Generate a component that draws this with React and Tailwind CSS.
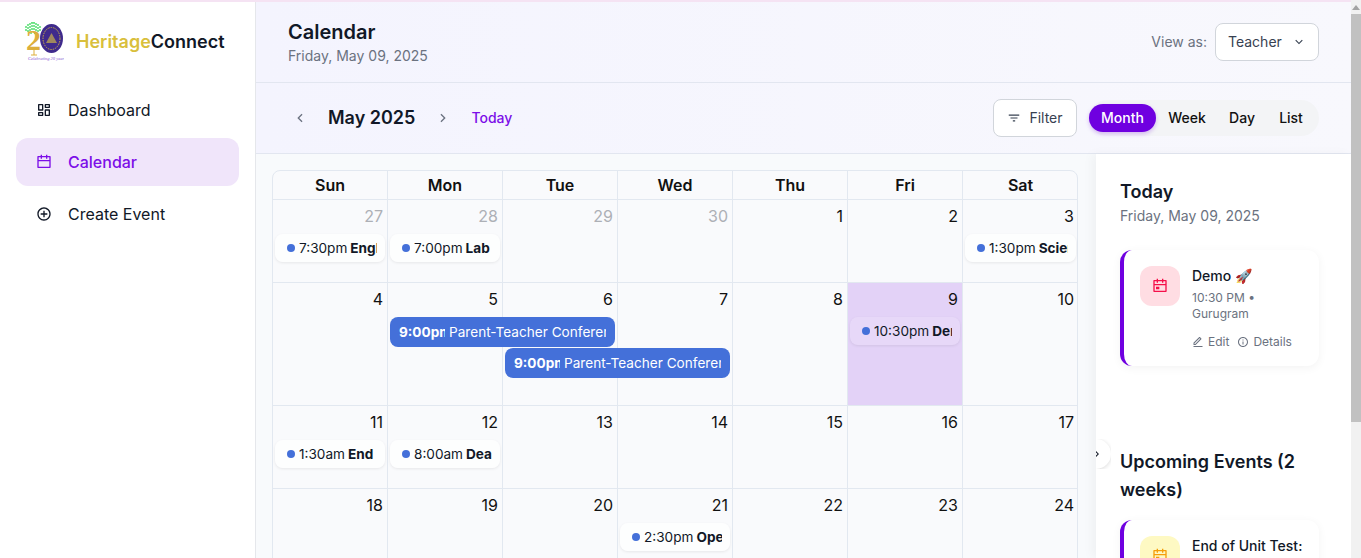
import React from 'react';
import {
    RiDashboardLine, RiCalendarLine, RiAddCircleLine, RiArrowDownSLine, RiArrowLeftSLine,
    RiArrowRightSLine, RiFilter3Line, RiCalendarEventLine, RiEditLine, RiInformationLine,
} from 'react-icons/ri';

const treeDots = [
    [2, 5], [4, 3], [6, 2], [8, 1], [10, 1], [12, 2], [14, 3], [16, 5],
    [2, 8], [4, 6], [6, 5], [8, 4], [10, 4], [12, 5], [14, 6], [16, 8],
    [4, 9], [6, 8], [8, 7], [10, 7], [12, 8], [14, 9], [7, 11], [11, 11],
];

const Logo = () => (
    <svg width="40" height="40" viewBox="0 0 40 40" className="shrink-0">
        {treeDots.map(([x, y], i) => (
            <circle key={i} cx={x} cy={y} r="1.1" fill="#5fe07a" />
        ))}
        <text x="2" y="28" fontFamily="Liberation Serif, serif" fontSize="30" fontWeight="700" fill="#dcae3c">2</text>
        <path d="M10 28 L10 33 M7 33 L13 33" stroke="#dcae3c" strokeWidth="1" />
        <ellipse cx="27.5" cy="16.5" rx="11.5" ry="14.5" fill="#3f2a8c" />
        <ellipse cx="27.5" cy="16.5" rx="8.5" ry="11" fill="none" stroke="#c9b04a" strokeWidth="1" strokeDasharray="1.5 1" />
        <path d="M22 21 L27.5 11 L33 21 Z" fill="#c9b04a" opacity="0.7" />
        <text x="4" y="38" fontFamily="Liberation Serif, serif" fontSize="4.5" fontStyle="italic" fill="#8b5cd6">Celebrating 20 years</text>
    </svg>
);

const NavItem = ({ icon: Icon, label, active }) => (
    <div className={`flex h-12 items-center gap-4 rounded-xl px-5 text-base ${active ? 'bg-[#f0e5fa] font-medium text-[#7c0ee8]' : 'text-[#111827]'}`}>
        <Icon size={16} />
        <span>{label}</span>
    </div>
);

const Pill = ({ time, title, today }) => (
    <div className={`mx-0.5 flex h-7 items-center overflow-hidden rounded-lg pl-3 pr-2 text-[13.6px] shadow-[0_1px_3px_rgba(0,0,0,0.08)] ${today ? 'bg-white/15' : 'bg-white/70'}`}>
        <span className="mr-1 h-2 w-2 shrink-0 rounded-full bg-[#4470d9]" />
        <div className="flex min-w-0 flex-1 items-center overflow-hidden whitespace-nowrap text-[#111827]">
            <span className="mr-[3px]">{time}</span>
            <b className="font-bold">{title}</b>
        </div>
    </div>
);

const SpanEvent = () => (
    <div className="relative z-10 mx-0.5 flex h-[30px] w-[225px] items-center overflow-hidden rounded-lg bg-[#4470d9] px-[9px] text-[13.6px] whitespace-nowrap text-white">
        <b className="w-[46px] shrink-0 overflow-hidden font-bold">9:00pm</b>
        <span className="ml-1 w-[158px] overflow-hidden">Parent-Teacher Conference</span>
    </div>
);

const weeks = [
    {
        h: 'h-[83px]',
        days: [
            { n: 27, muted: true, time: '7:30pm', title: 'English Essay' },
            { n: 28, muted: true, time: '7:00pm', title: 'Lab' },
            { n: 29, muted: true },
            { n: 30, muted: true },
            { n: 1 },
            { n: 2 },
            { n: 3, time: '1:30pm', title: 'Science' },
        ],
    },
    {
        h: 'h-[123px]',
        days: [
            { n: 4 },
            { n: 5, span: 0 },
            { n: 6, span: 1 },
            { n: 7 },
            { n: 8 },
            { n: 9, today: true, time: '10:30pm', title: 'Demo 🚀' },
            { n: 10 },
        ],
    },
    {
        h: 'h-[83px]',
        days: [
            { n: 11, time: '1:30am', title: 'End' },
            { n: 12, time: '8:00am', title: 'Dea' },
            { n: 13 },
            { n: 14 },
            { n: 15 },
            { n: 16 },
            { n: 17 },
        ],
    },
    {
        h: 'h-[83px]',
        days: [
            { n: 18 },
            { n: 19 },
            { n: 20 },
            { n: 21, time: '2:30pm', title: 'Open House' },
            { n: 22 },
            { n: 23 },
            { n: 24 },
        ],
    },
];

const Calendar = () => (
    <div className="w-[806px] shrink-0 rounded-t-lg border border-[#e2e8f0] bg-[#f9fafc]">
        <div className="grid h-[29px] grid-cols-[repeat(7,115px)] border-b border-[#e2e8f0]">
            {['Sun', 'Mon', 'Tue', 'Wed', 'Thu', 'Fri', 'Sat'].map((d) => (
                <div key={d} className="flex items-center justify-center border-r border-[#e2e8f0] text-base font-semibold text-[#111] last:border-r-0">{d}</div>
            ))}
        </div>
        {weeks.map((w, i) => (
            <div key={i} className={`grid grid-cols-[repeat(7,115px)] border-b border-[#e2e8f0] ${w.h}`}>
                {w.days.map((d) => (
                    <div key={d.n} className={`min-w-0 border-r border-[#e2e8f0] last:border-r-0 ${d.today ? 'bg-[#e3d2f7]' : ''}`}>
                        <div className={`h-[34px] pr-1 pt-1 text-right text-base leading-6 ${d.muted ? 'text-[#adb0b6]' : 'text-[#111]'}`}>{d.n}</div>
                        {d.time && <Pill time={d.time} title={d.title} today={d.today} />}
                        {d.span === 0 && <SpanEvent />}
                        {d.span === 1 && <div className="pt-[31px]"><SpanEvent /></div>}
                    </div>
                ))}
            </div>
        ))}
    </div>
);

const EventCard = ({ tone, iconColor, title, time, place }) => (
    <div className="flex gap-3 rounded-xl border-l-4 border-[#6f00e0] bg-white p-4 shadow-[0_2px_10px_rgba(0,0,0,0.05)]">
        <div className={`flex h-10 w-10 shrink-0 items-center justify-center rounded-xl ${tone} ${iconColor}`}>
            <RiCalendarEventLine size={16} />
        </div>
        <div className="min-w-0">
            <div className="text-sm font-medium leading-5 text-[#111827]">{title}</div>
            {time && (
                <>
                    <div className="mt-1 text-xs leading-4 text-[#6b7280]">{time} •<br />{place}</div>
                    <div className="mt-3 flex items-center gap-2 text-xs text-[#6b7280]">
                        <span className="flex items-center gap-1"><RiEditLine size={12} />Edit</span>
                        <span className="flex items-center gap-1"><RiInformationLine size={12} />Details</span>
                    </div>
                </>
            )}
        </div>
    </div>
);

const App = () => (
    <div className="flex h-[558px] overflow-hidden bg-white font-['Inter',sans-serif]">
        <div className="flex min-w-0 flex-1 flex-col overflow-hidden">
            <div className="h-0.5 shrink-0 bg-[#f5e3f3]" />
            <div className="flex min-h-0 flex-1">
                <aside className="w-[256px] shrink-0 border-r border-[#e5e7eb] bg-white px-4">
                    <div className="flex items-center gap-3 pl-2 pt-5">
                        <Logo />
                        <span className="text-lg font-semibold"><span className="text-[#d9bf3c]">Heritage</span><span className="text-[#111827]">Connect</span></span>
                    </div>
                    <nav className="mt-6 flex flex-col gap-1">
                        <NavItem icon={RiDashboardLine} label="Dashboard" />
                        <NavItem icon={RiCalendarLine} label="Calendar" active />
                        <NavItem icon={RiAddCircleLine} label="Create Event" />
                    </nav>
                </aside>
                <main className="flex min-w-0 flex-1 flex-col">
                    <header className="flex h-[81px] shrink-0 items-center justify-between border-b border-[#e2e6f0] bg-gradient-to-r from-[#f4f4fe] to-[#f8f8fd] px-8">
                        <div>
                            <h1 className="text-xl font-semibold leading-7 text-[#111827]">Calendar</h1>
                            <p className="text-sm leading-5 text-[#6b7280]">Friday, May 09, 2025</p>
                        </div>
                        <div className="flex items-center gap-2">
                            <span className="text-sm text-[#6b7280]">View as:</span>
                            <div className="flex h-[38px] w-[104px] items-center justify-between rounded-lg border border-[#d1d5db] bg-white px-3 text-sm text-[#374151]">
                                Teacher <RiArrowDownSLine size={14} />
                            </div>
                        </div>
                    </header>
                    <div className="flex h-[71px] shrink-0 items-center justify-between border-b border-[#e2e6f0] bg-gradient-to-r from-[#f4f4fe] to-[#f8f8fd] pl-9 pr-8">
                        <div className="flex items-center">
                            <RiArrowLeftSLine size={16} className="text-[#6b7280]" />
                            <span className="ml-5 text-lg font-semibold text-[#111827]">May 2025</span>
                            <RiArrowRightSLine size={16} className="ml-5 text-[#6b7280]" />
                            <span className="ml-5 text-sm font-medium text-[#7c0ee8]">Today</span>
                        </div>
                        <div className="flex items-center gap-3">
                            <div className="flex h-[38px] w-[84px] items-center justify-center gap-2 rounded-lg border border-[#d1d5db] bg-white text-sm text-[#374151]">
                                <RiFilter3Line size={14} />Filter
                            </div>
                            <div className="flex h-9 w-[230px] items-center rounded-full bg-[#f3f4f6] text-sm font-medium text-[#111]">
                                <span className="flex h-7 w-[67px] items-center justify-center rounded-full bg-[#6f00e0] text-white shadow-[0_2px_4px_rgba(111,0,224,0.25)]">Month</span>
                                <span className="w-[62px] text-center">Week</span>
                                <span className="w-[48px] text-center">Day</span>
                                <span className="w-[50px] text-center">List</span>
                            </div>
                        </div>
                    </div>
                    <div className="flex min-h-0 flex-1 bg-[#f8fafc]">
                        <div className="min-w-0 flex-1 overflow-hidden pl-4 pt-4">
                            <Calendar />
                        </div>
                        <div className="relative w-[255px] shrink-0 bg-white pl-6 pr-8 pt-[26px] shadow-[-4px_0_10px_rgba(0,0,0,0.04)]">
                            <div className="absolute left-0 top-[285px] h-[30px] w-[15px] overflow-hidden">
                                <div className="flex h-[30px] w-[30px] -translate-x-[15px] items-center justify-center rounded-full bg-white pl-[2px] text-[#111827] shadow-[0_1px_4px_rgba(0,0,0,0.15)]">
                                    <RiArrowRightSLine size={12} />
                                </div>
                            </div>
                            <h2 className="text-lg font-semibold leading-6 text-[#111827]">Today</h2>
                            <p className="mt-0.5 text-sm leading-5 text-[#6b7280]">Friday, May 09, 2025</p>
                            <div className="mt-6">
                                <EventCard tone="bg-[#ffdde3]" iconColor="text-[#f5104a]" title="Demo 🚀" time="10:30 PM" place="Gurugram" />
                            </div>
                            <h2 className="mt-[82px] text-lg font-semibold leading-7 text-[#111827]">Upcoming Events (2 weeks)</h2>
                            <div className="mt-4">
                                <EventCard tone="bg-[#fef9c3]" iconColor="text-[#f59e0b]" title="End of Unit Test: Science" />
                            </div>
                        </div>
                    </div>
                </main>
            </div>
        </div>
        <div className="flex w-[10px] shrink-0 flex-col bg-[#f1f1f1]">
            <div className="flex h-[14px] items-center justify-center">
                <svg width="8" height="5" viewBox="0 0 8 5"><path d="M4 0 L8 5 L0 5 Z" fill="#a3a3a3" /></svg>
            </div>
            <div className="h-[408px] bg-[#c1c1c1]" />
        </div>
    </div>
);

export default App;
